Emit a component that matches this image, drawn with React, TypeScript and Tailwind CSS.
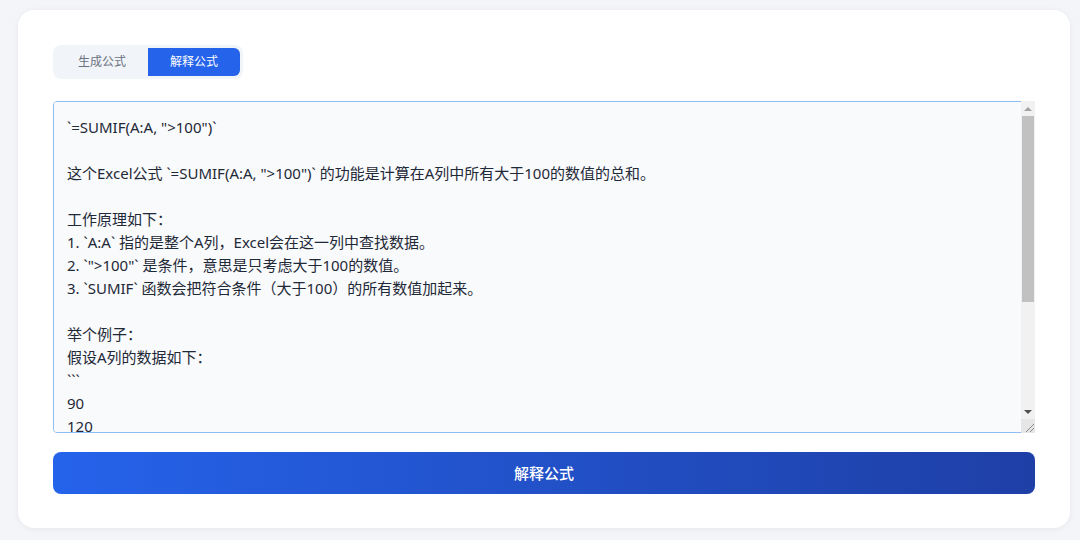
import { useState } from "react";

const explanation = `\`=SUMIF(A:A, ">100")\`

这个Excel公式 \`=SUMIF(A:A, ">100")\` 的功能是计算在A列中所有大于100的数值的总和。

工作原理如下：
1. \`A:A\` 指的是整个A列，Excel会在这一列中查找数据。
2. \`">100"\` 是条件，意思是只考虑大于100的数值。
3. \`SUMIF\` 函数会把符合条件（大于100）的所有数值加起来。

举个例子：
假设A列的数据如下：
\`\`\`
90
120
150
80
200
\`\`\`
那么这个公式会把120、150和200加起来，结果是470。

简单来说，这个公式就是帮你快速算出A列中所有大于100的数字之和。`;

// headless browser hides native scrollbars, so draw the classic one on top
function FakeScrollbar() {
  return (
    <div className="absolute top-0 right-0 bottom-0 w-[14px] flex flex-col bg-[#f1f1f1] pointer-events-none">
      <div className="h-[15px] flex items-center justify-center">
        <svg width="8" height="5" viewBox="0 0 8 5">
          <path d="M0 5 L4 1 L8 5 Z" fill="#a3a3a3" />
        </svg>
      </div>
      <div className="h-[186px] mx-[1px] bg-[#c1c1c1]" />
      <div className="flex-1" />
      <div className="h-[14px] flex items-center justify-center">
        <svg width="8" height="5" viewBox="0 0 8 5">
          <path d="M0 0 L8 0 L4 4 Z" fill="#505050" />
        </svg>
      </div>
      <div className="h-[14px] bg-[#e6e6e6] flex items-end justify-end">
        <svg width="12" height="12" viewBox="0 0 12 12">
          <path d="M11 3 L3 11 M11 7 L7 11" stroke="#8a8a8a" strokeWidth="1" />
        </svg>
      </div>
    </div>
  );
}

export default function App() {
  const [mode, setMode] = useState<"gen" | "explain">("explain");

  return (
    <div
      className="min-h-[540px] bg-[#f3f5f8] pt-[10px] pl-[18px] pr-[10px] pb-[13px]"
      style={{ fontFamily: '"Noto Sans", "Noto Sans CJK SC", sans-serif' }}
    >
      <div className="bg-white rounded-2xl shadow-[0_1px_6px_rgba(15,23,42,0.06)] p-[35px] pb-[34px]">
        <div className="inline-flex bg-[#f1f4f8] rounded-lg p-[3px] mb-[22px]">
          <button
            onClick={() => setMode("gen")}
            className={
              mode === "gen"
                ? "w-[92px] h-[28px] text-[12px] bg-[#2563eb] text-white rounded-r-md"
                : "w-[92px] h-[28px] text-[12px] text-[#6b7280]"
            }
          >
            生成公式
          </button>
          <button
            onClick={() => setMode("explain")}
            className={
              mode === "explain"
                ? "w-[92px] h-[28px] text-[12px] bg-[#2563eb] text-white rounded-r-md"
                : "w-[92px] h-[28px] text-[12px] text-[#6b7280]"
            }
          >
            解释公式
          </button>
        </div>

        <div className="relative w-[982px] h-[332px]">
          <textarea
            defaultValue={explanation}
            className="block w-full h-full resize-none bg-[#f8fafc] border border-[#8fbdf3] rounded-[4px] pl-[13px] pr-[28px] py-[14px] text-[15px] leading-[23px] text-[#1f2937] outline-none"
            style={{ fontFamily: '"Noto Sans", "Noto Sans CJK SC", sans-serif' }}
          />
          <FakeScrollbar />
        </div>

        <button className="mt-[19px] w-[982px] h-[42px] rounded-lg bg-gradient-to-r from-[#2563eb] to-[#1e3fa6] text-white text-[15px] font-medium">
          解释公式
        </button>
      </div>
    </div>
  );
}
